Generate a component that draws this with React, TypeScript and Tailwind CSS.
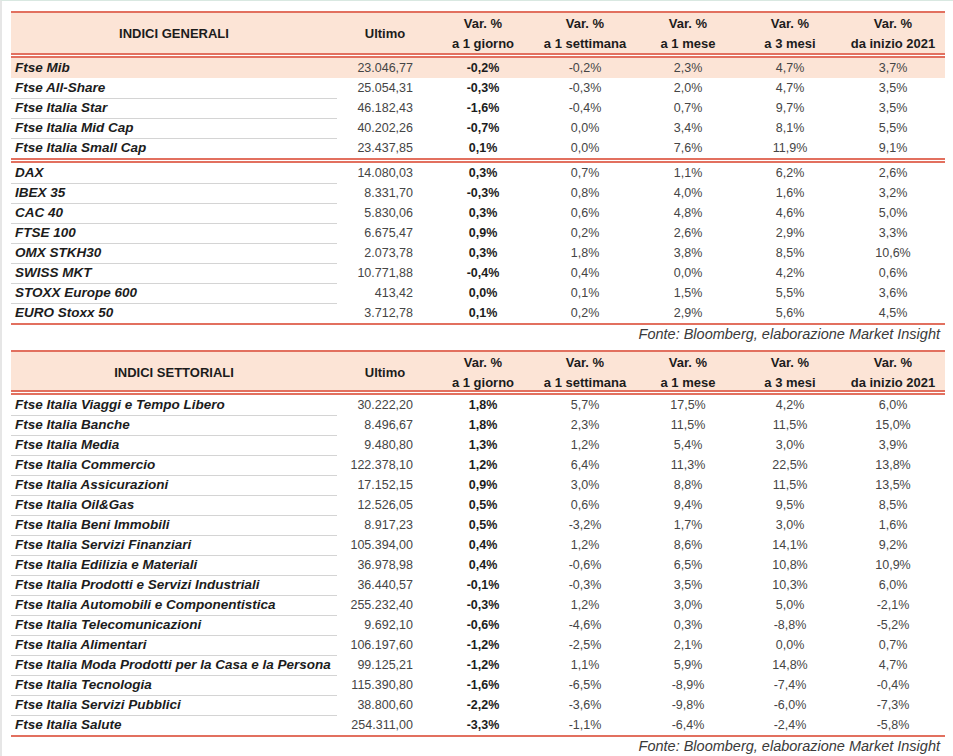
import React from "react";

type Row = [string, string, string, string, string, string, string];

const g1: Row[] = [
  ["Ftse Mib", "23.046,77", "-0,2%", "-0,2%", "2,3%", "4,7%", "3,7%"],
  ["Ftse All-Share", "25.054,31", "-0,3%", "-0,3%", "2,0%", "4,7%", "3,5%"],
  ["Ftse Italia Star", "46.182,43", "-1,6%", "-0,4%", "0,7%", "9,7%", "3,5%"],
  ["Ftse Italia Mid Cap", "40.202,26", "-0,7%", "0,0%", "3,4%", "8,1%", "5,5%"],
  ["Ftse Italia Small Cap", "23.437,85", "0,1%", "0,0%", "7,6%", "11,9%", "9,1%"],
];

const g2: Row[] = [
  ["DAX", "14.080,03", "0,3%", "0,7%", "1,1%", "6,2%", "2,6%"],
  ["IBEX 35", "8.331,70", "-0,3%", "0,8%", "4,0%", "1,6%", "3,2%"],
  ["CAC 40", "5.830,06", "0,3%", "0,6%", "4,8%", "4,6%", "5,0%"],
  ["FTSE 100", "6.675,47", "0,9%", "0,2%", "2,6%", "2,9%", "3,3%"],
  ["OMX STKH30", "2.073,78", "0,3%", "1,8%", "3,8%", "8,5%", "10,6%"],
  ["SWISS MKT", "10.771,88", "-0,4%", "0,4%", "0,0%", "4,2%", "0,6%"],
  ["STOXX Europe 600", "413,42", "0,0%", "0,1%", "1,5%", "5,5%", "3,6%"],
  ["EURO Stoxx 50", "3.712,78", "0,1%", "0,2%", "2,9%", "5,6%", "4,5%"],
];

const g3: Row[] = [
  ["Ftse Italia Viaggi e Tempo Libero", "30.222,20", "1,8%", "5,7%", "17,5%", "4,2%", "6,0%"],
  ["Ftse Italia Banche", "8.496,67", "1,8%", "2,3%", "11,5%", "11,5%", "15,0%"],
  ["Ftse Italia Media", "9.480,80", "1,3%", "1,2%", "5,4%", "3,0%", "3,9%"],
  ["Ftse Italia Commercio", "122.378,10", "1,2%", "6,4%", "11,3%", "22,5%", "13,8%"],
  ["Ftse Italia Assicurazioni", "17.152,15", "0,9%", "3,0%", "8,8%", "11,5%", "13,5%"],
  ["Ftse Italia Oil&Gas", "12.526,05", "0,5%", "0,6%", "9,4%", "9,5%", "8,5%"],
  ["Ftse Italia Beni Immobili", "8.917,23", "0,5%", "-3,2%", "1,7%", "3,0%", "1,6%"],
  ["Ftse Italia Servizi Finanziari", "105.394,00", "0,4%", "1,2%", "8,6%", "14,1%", "9,2%"],
  ["Ftse Italia Edilizia e Materiali", "36.978,98", "0,4%", "-0,6%", "6,5%", "10,8%", "10,9%"],
  ["Ftse Italia Prodotti e Servizi Industriali", "36.440,57", "-0,1%", "-0,3%", "3,5%", "10,3%", "6,0%"],
  ["Ftse Italia Automobili e Componentistica", "255.232,40", "-0,3%", "1,2%", "3,0%", "5,0%", "-2,1%"],
  ["Ftse Italia Telecomunicazioni", "9.692,10", "-0,6%", "-4,6%", "0,3%", "-8,8%", "-5,2%"],
  ["Ftse Italia Alimentari", "106.197,60", "-1,2%", "-2,5%", "2,1%", "0,0%", "0,7%"],
  ["Ftse Italia Moda Prodotti per la Casa e la Persona", "99.125,21", "-1,2%", "1,1%", "5,9%", "14,8%", "4,7%"],
  ["Ftse Italia Tecnologia", "115.390,80", "-1,6%", "-6,5%", "-8,9%", "-7,4%", "-0,4%"],
  ["Ftse Italia Servizi Pubblici", "38.800,60", "-2,2%", "-3,6%", "-9,8%", "-6,0%", "-7,3%"],
  ["Ftse Italia Salute", "254.311,00", "-3,3%", "-1,1%", "-6,4%", "-2,4%", "-5,8%"],
];

const GRID = "grid grid-cols-[326px_96px_100px_104px_102px_102px_104px]";

function DataRow({ r, last, peach }: { r: Row; last: boolean; peach?: boolean }) {
  return (
    <div className={`${GRID} h-[20px] items-center ${peach ? "bg-[#fce4d6]" : ""}`}>
      <div
        className={`h-full flex items-center pl-[4px] font-bold italic text-[13.5px] text-[#1c1c1c] ${
          last || peach ? "" : "border-b border-[#d4d4d4]"
        }`}
      >
        {r[0]}
      </div>
      <div className="text-right pr-[20px] text-[12.5px] text-[#454545]">{r[1]}</div>
      <div className="text-center font-bold text-[12.5px] text-[#1c1c1c]">{r[2]}</div>
      <div className="text-center text-[12.5px] text-[#454545]">{r[3]}</div>
      <div className="text-center text-[12.5px] text-[#454545]">{r[4]}</div>
      <div className="text-center text-[12.5px] text-[#454545]">{r[5]}</div>
      <div className="text-center text-[12.5px] text-[#454545]">{r[6]}</div>
    </div>
  );
}

function Group({ rows, firstPeach }: { rows: Row[]; firstPeach?: boolean }) {
  return (
    <div>
      {rows.map((r, i) => (
        <DataRow key={r[0]} r={r} last={i === rows.length - 1} peach={firstPeach && i === 0} />
      ))}
    </div>
  );
}

function HeadCell({ a, b }: { a: string; b: string }) {
  return (
    <div className="flex flex-col items-center pt-[1px] leading-[20px] font-bold text-[13px] text-[#1c1c1c]">
      <span>{a}</span>
      <span>{b}</span>
    </div>
  );
}

function Header({ title, h }: { title: string; h: string }) {
  return (
    <div className={`${GRID} ${h} bg-[#fce4d6] border-t-2 border-[#e2705f]`}>
      <div className="flex items-center justify-center font-bold text-[13px] text-[#1c1c1c]">{title}</div>
      <div className="flex items-center justify-center font-bold text-[13px] text-[#1c1c1c]">Ultimo</div>
      <HeadCell a="Var. %" b="a 1 giorno" />
      <HeadCell a="Var. %" b="a 1 settimana" />
      <HeadCell a="Var. %" b="a 1 mese" />
      <HeadCell a="Var. %" b="a 3 mesi" />
      <HeadCell a="Var. %" b="da inizio 2021" />
    </div>
  );
}

function Double() {
  return <div className="h-[5px] bg-white border-y-2 border-[#e2705f]" />;
}

function Fonte({ h }: { h: string }) {
  return (
    <div className={`${h} flex justify-end pr-[5px] leading-[18px] italic text-[14.5px] text-[#3a3a3a]`}>
      Fonte: Bloomberg, elaborazione Market Insight
    </div>
  );
}

export default function App() {
  return (
    <div
      className="w-[953px] h-[756px] bg-white border-t border-[#d9e8e1] border-l-2 border-l-[#e6e6e6] pt-[10px] pl-[9px] overflow-hidden"
      style={{ fontFamily: '"Liberation Sans", Arial, sans-serif' }}
    >
      <div className="w-[934px]">
        <Header title="INDICI GENERALI" h="h-[42px]" />
        <Double />
        <Group rows={g1} firstPeach />
        <Double />
        <Group rows={g2} />
        <div className="h-[2px] bg-[#e2705f]" />
        <Fonte h="h-[25px]" />
        <Header title="INDICI SETTORIALI" h="h-[40px]" />
        <Double />
        <Group rows={g3} />
        <div className="h-[2px] bg-[#e2705f]" />
        <Fonte h="h-[20px]" />
      </div>
    </div>
  );
}
